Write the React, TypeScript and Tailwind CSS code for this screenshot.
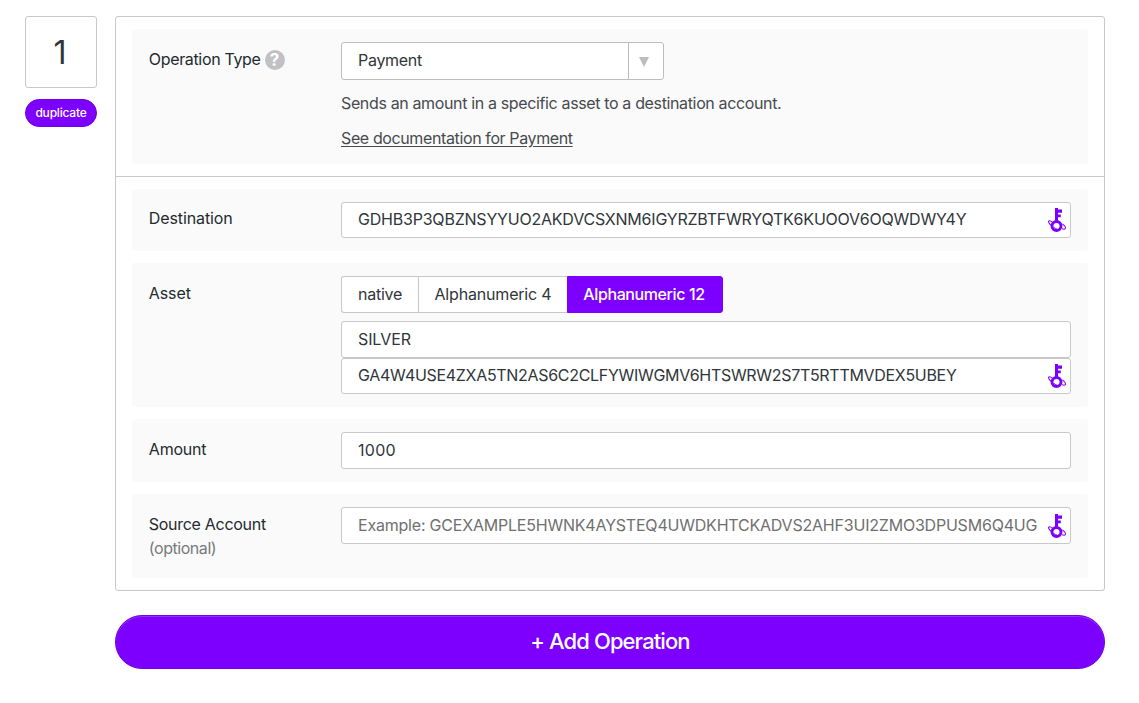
import type { ReactNode } from "react";

function KeyIcon() {
  return (
    <svg
      className="pointer-events-none absolute right-[4px] top-1/2 h-[26px] w-[20px] -translate-y-1/2"
      viewBox="0 0 20 26"
      fill="none"
    >
      <path d="M8 1h3v1.6h4v3.2h-4v1.6h2.800v2.800H11v5H8z" fill="#7d00ff" />
      <circle cx="9.500" cy="19" r="4.500" stroke="#7d00ff" strokeWidth="2.900" />
      <path
        d="M5.500 15.300C3 13.200 1.300 13.400 1.600 15.200c.3 1.400 1.600 2.800 3.600 4.200M15 21.800c1.500.5 2.900.4 3.300-.2.600-1.100-.7-3-2.900-4.700"
        stroke="#7d00ff"
        strokeWidth="1.100"
      />
      <path d="M6.800 20.400c1 .8 2.100 1.400 3.400 1.900" stroke="#7d00ff" strokeWidth="1" />
    </svg>
  );
}

function Row({ label, note, className, children }: { label: ReactNode; note?: string; className: string; children: ReactNode }) {
  return (
    <div className={`flex rounded-[3px] bg-[#fafafa] pl-4 pr-[17px] pt-[13px] ${className}`}>
      <div className="w-[193px] shrink-0 pl-[0.8px] pt-[5px] leading-6 text-[#222b30]">
        {label}
        {note && <div className="tracking-[-0.45px] text-[#777a7c]">{note}</div>}
      </div>
      <div className="min-w-0 flex-1">{children}</div>
    </div>
  );
}

function Field({ value, placeholder, icon, className }: { value?: string; placeholder?: string; icon?: boolean; className: string }) {
  return (
    <div className="relative">
      <input
        type="text"
        defaultValue={value}
        placeholder={placeholder}
        className={`block w-full rounded-[3px] border border-[#c8c8c8] bg-white pb-[2px] pl-4 pr-8 text-[#30363a] outline-none placeholder:text-[#707070] ${className}`}
      />
      {icon && <KeyIcon />}
    </div>
  );
}

export default function App() {
  return (
    <main className="flex h-[703px] w-[1139px] gap-[18px] bg-white pl-[25px] pt-4 font-['Inter','Liberation_Sans',sans-serif] text-base">
      <aside className="w-[72px] shrink-0">
        <div className="flex h-[72px] items-center justify-center rounded-[3px] border border-[#c8c8c8] pr-[2px] pt-[2px] text-[32px] text-[#30363a]">
          1
        </div>
        <button className="mt-[11px] flex h-7 w-full items-center justify-center rounded-full border border-[#7000e6] bg-[#7d00ff] text-[12px] font-medium tracking-[-0.2px] text-white">
          duplicate
        </button>
      </aside>
      <div className="w-[990px]">
        <section className="rounded-[3px] border border-[#c8c8c8]">
          <div className="border-b border-[#c8c8c8] px-4 py-3">
            <Row
              className="h-[135px]"
              label={
                <span className="flex items-center">
                  <span className="tracking-[-0.34px]">Operation Type</span>
                  <span className="ml-[4px] mt-[2px] flex size-5 items-center justify-center rounded-full bg-[#c0c1c2] text-[17px] font-bold leading-none text-white">
                    ?
                  </span>
                </span>
              }
            >
              <div className="flex h-[38px] w-[323px] rounded-[3px] border border-[#bdbdbd] bg-white">
                <span className="flex-1 pl-4 leading-[34px] tracking-[-0.29px] text-[#30363a]">Payment</span>
                <span className="flex w-[35px] items-center border-l border-[#bdbdbd] pl-[10px]">
                  <svg className="mt-[2px] h-[10px] w-[10px]" viewBox="0 0 10 10">
                    <path d="M0 0h10L5 10z" fill="#bdbdbd" />
                  </svg>
                </span>
              </div>
              <p className="mt-[11px] leading-6 tracking-[-0.36px] text-[#464b4e]">
                Sends an amount in a specific asset to a destination account.
              </p>
              <a className="mt-[11px] block leading-6 tracking-[-0.38px] text-[#464b4e] underline underline-offset-2" href="#">
                See documentation for Payment
              </a>
            </Row>
          </div>
          <div className="flex flex-col gap-3 px-4 py-3">
            <Row className="h-[62px]" label={<span className="-mt-px block tracking-[-0.1px]">Destination</span>}>
              <Field className="h-9 tracking-[-0.21px]" value="GDHB3P3QBZNSYYUO2AKDVCSXNM6IGYRZBTFWRYQTK6KUOOV6OQWDWY4Y" icon />
            </Row>
            <Row className="h-36" label={<span className="tracking-[-0.1px]">Asset</span>}>
              <div className="mb-2 flex h-[37px] w-[382px] leading-[35px] text-[#30363a]">
                <button className="w-[77px] rounded-l-[3px] border border-r-0 border-[#c8c8c8] bg-white tracking-[-0.25px]">native</button>
                <button className="w-[149px] border border-r-0 border-[#c8c8c8] bg-white tracking-[-0.18px]">Alphanumeric 4</button>
                <button className="w-[156px] rounded-r-[3px] border border-[#7d00ff] bg-[#7d00ff] pr-[2px] font-medium tracking-[-0.4px] text-white">
                  Alphanumeric 12
                </button>
              </div>
              <Field className="h-[37px] tracking-[-0.1px]" value="SILVER" />
              <Field className="h-9 tracking-[-0.31px]" value="GA4W4USE4ZXA5TN2AS6C2CLFYWIWGMV6HTSWRW2S7T5RTTMVDEX5UBEY" icon />
            </Row>
            <Row className="h-[63px]" label={<span className="tracking-[-0.2px]">Amount</span>}>
              <Field className="h-[37px] tracking-[0.3px]" value="1000" />
            </Row>
            <Row className="h-[84px]" label={<span className="tracking-[-0.29px]">Source Account</span>} note="(optional)">
              <Field
                className="h-[37px] tracking-[-0.21px]"
                placeholder="Example: GCEXAMPLE5HWNK4AYSTEQ4UWDKHTCKADVS2AHF3UI2ZMO3DPUSM6Q4UG"
                icon
              />
            </Row>
          </div>
        </section>
        <button className="mt-6 flex h-[54px] w-full items-center justify-center rounded-full border border-[#7000e6] bg-[#7d00ff] pb-[2px] text-[22px] font-medium tracking-[-0.9px] text-white shadow-[inset_0_1px_0_#9433ff]">
          + Add Operation
        </button>
      </div>
    </main>
  );
}
